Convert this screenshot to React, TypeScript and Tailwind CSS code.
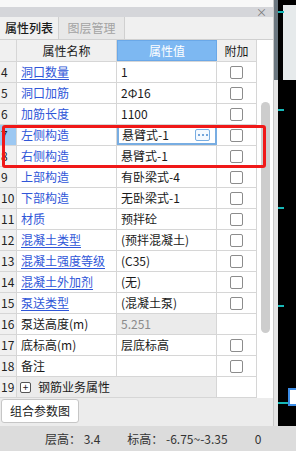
import React from "react";

type Row = {
  n: number;
  name: string;
  value: string;
  blue?: boolean;
  ul?: boolean;
  check?: boolean;
  readonly?: boolean;
  editing?: boolean;
};

const rows: Row[] = [
  { n: 4, name: "洞口数量", value: "1", blue: true, ul: true, check: true },
  { n: 5, name: "洞口加筋", value: "2Φ16", blue: true, check: true },
  { n: 6, name: "加筋长度", value: "1100", blue: true, check: true },
  { n: 7, name: "左侧构造", value: "悬臂式-1", blue: true, check: true, editing: true },
  { n: 8, name: "右侧构造", value: "悬臂式-1", blue: true, check: true },
  { n: 9, name: "上部构造", value: "有卧梁式-4", blue: true, check: true },
  { n: 10, name: "下部构造", value: "无卧梁式-1", blue: true, check: true },
  { n: 11, name: "材质", value: "预拌砼", blue: true, check: true },
  { n: 12, name: "混凝土类型", value: "(预拌混凝土)", blue: true, ul: true, check: true },
  { n: 13, name: "混凝土强度等级", value: "(C35)", blue: true, ul: true, check: true },
  { n: 14, name: "混凝土外加剂", value: "(无)", blue: true, ul: true, check: true },
  { n: 15, name: "泵送类型", value: "(混凝土泵)", blue: true, ul: true, check: true },
  { n: 16, name: "泵送高度(m)", value: "5.251", readonly: true },
  { n: 17, name: "底标高(m)", value: "层底标高", check: true },
  { n: 18, name: "备注", value: "", check: true },
];

function Checkbox() {
  return <span className="block h-[13px] w-[13px] rounded-[2px] border border-[#8c8c8c] bg-white" />;
}

function PropRow({ row }: { row: Row }) {
  return (
    <div className="flex h-[21px] border-b border-[#d6d6d6]">
      <div
        className={`flex w-[17px] items-center border-r border-[#d6d6d6] pl-[1px] text-[12px] text-[#222] ${
          row.editing ? "bg-[#9cc8f2]" : "bg-[#f0f0f0]"
        }`}
      >
        {row.n}
      </div>
      <div
        className={`flex w-[100px] items-center border-r border-[#d6d6d6] bg-white pl-[4px] text-[12px] ${
          row.blue ? "text-[#2f56d8]" : "text-[#1a1a1a]"
        }`}
      >
        <span className={row.ul ? "underline decoration-[#2f56d8] underline-offset-2" : ""}>{row.name}</span>
      </div>
      {row.editing ? (
        <div className="flex w-[100px] items-center justify-between border-2 border-[#78ade2] bg-white pl-[3px] pr-[5px] text-[12px] text-[#1a1a1a]">
          <span>{row.value}</span>
          <span className="flex h-[12px] w-[15px] items-center justify-center gap-[2px] rounded-[2px] border border-[#78ade2] bg-[#f4f9ff]">
            <span className="h-[2px] w-[2px] rounded-full bg-[#4a8ad0]" />
            <span className="h-[2px] w-[2px] rounded-full bg-[#4a8ad0]" />
            <span className="h-[2px] w-[2px] rounded-full bg-[#4a8ad0]" />
          </span>
        </div>
      ) : (
        <div
          className={`flex w-[100px] items-center border-r border-[#d6d6d6] pl-[4px] text-[12px] ${
            row.readonly ? "bg-[#ebebeb] text-[#8a8a8a]" : "bg-white text-[#1a1a1a]"
          }`}
        >
          {row.value}
        </div>
      )}
      <div className="flex w-[40px] items-center justify-center border-r border-[#d6d6d6] bg-white">
        {row.check && <Checkbox />}
      </div>
    </div>
  );
}

export default function App() {
  return (
    <div
      className="flex h-[451px] w-[296px] flex-col overflow-hidden bg-[#f0f0f0]"
      style={{ fontFamily: '"Microsoft YaHei", "Noto Sans CJK SC", sans-serif' }}
    >
      <div className="flex h-[426px]">
        {/* property panel */}
        <div className="flex w-[274px] flex-col border-r border-[#c8c8c8] bg-[#f0f0f0]">
          <div className="h-[7px] bg-[#f8f8f8]" />
          <div className="flex h-[10px] items-center justify-end bg-[#d5d6da] pr-[6px] text-[11px] leading-none text-[#777]">
            ×
          </div>
          <div className="flex h-[23px] items-stretch border-b border-[#d0d0d0]">
            <div className="flex w-[59px] items-center justify-center border-r border-[#d0d0d0] bg-[#f0f0f0] text-[12px] font-medium text-[#1a1a1a]">
              属性列表
            </div>
            <div className="flex w-[66px] items-center justify-center border-r border-[#d0d0d0] bg-[#e8e8e8] text-[12px] text-[#a3a3a3]">
              图层管理
            </div>
          </div>

          <div className="relative flex bg-white">
            <div className="flex flex-col">
              <div className="flex h-[22px] border-b border-[#d6d6d6] text-[12px]">
                <div className="w-[17px] border-r border-[#d6d6d6] bg-[#f0f0f0]" />
                <div className="flex w-[100px] items-center justify-center border-r border-[#d6d6d6] bg-[#f0f0f0] text-[#1a1a1a]">
                  属性名称
                </div>
                <div className="flex w-[100px] items-center justify-center border border-[#6aa8e8] bg-[#7db8f2] text-white">
                  属性值
                </div>
                <div className="flex w-[40px] items-center justify-center border-r border-[#d6d6d6] bg-[#f0f0f0] text-[#1a1a1a]">
                  附加
                </div>
              </div>
              {rows.map((r) => (
                <PropRow key={r.n} row={r} />
              ))}
              <div className="flex h-[21px] border-b border-[#d6d6d6] bg-[#ebebeb]">
                <div className="flex w-[17px] items-center border-r border-[#d6d6d6] bg-[#f0f0f0] pl-[1px] text-[12px] text-[#222]">
                  19
                </div>
                <div className="flex w-[200px] items-center gap-[7px] border-r border-[#d6d6d6] pl-[3px] text-[12px] text-[#1a1a1a]">
                  <span className="flex h-[11px] w-[11px] items-center justify-center rounded-[2px] border border-[#555] bg-white text-[10px] leading-none">
                    +
                  </span>
                  钢筋业务属性
                </div>
                <div className="w-[40px] border-r border-[#d6d6d6] bg-white" />
              </div>
            </div>
            {/* scrollbar */}
            <div className="flex w-[16px] justify-center bg-white pt-[62px]">
              <div className="h-[231px] w-[9px] rounded-full bg-[#cdcdcd]" />
            </div>
            {/* highlight */}
            <div className="absolute left-[2px] top-[85px] h-[43px] w-[264px] rounded-[3px] border-[3px] border-[#f01818]" />
          </div>

          <div className="flex flex-1 items-start bg-[#ececec] pl-[1px] pt-[1px]">
            <button className="h-[24px] w-[78px] rounded-[3px] border border-[#c6c6c6] bg-white text-[12px] text-[#1a1a1a]">
              组合参数图
            </button>
          </div>
        </div>

        <div className="flex w-[4px] flex-col bg-[#e4e4e4]">
          <div className="h-[80px] bg-[#6b7780]" />
        </div>

        {/* drawing area */}
        <div className="relative flex-1 bg-black">
          <div className="absolute left-[5px] top-[5px] h-[75px] w-[14px] bg-[#e6eaeb]" />
          <div className="absolute left-0 top-[11px] h-[2px] w-[6px] bg-[#17b8b8]" />
          <div className="absolute left-0 top-[109px] h-[2px] w-[6px] bg-[#17b8b8]" />
          <div className="absolute left-0 top-[207px] h-[2px] w-[6px] bg-[#17b8b8]" />
          <div className="absolute left-0 top-[305px] h-[2px] w-[6px] bg-[#17b8b8]" />
          <div className="absolute left-0 top-[402px] h-[2px] w-[10px] bg-[#17b8b8]" />
          <div className="absolute left-[10px] top-[388px] flex h-[18px] w-[10px] items-center justify-center border-2 border-[#3d8ee8] bg-white" />
        </div>
      </div>

      <div className="flex h-[25px] items-center bg-[#dcdcdc] text-[12px] text-[#333]">
        <span className="ml-[45px]">层高： 3.4</span>
        <span className="ml-[27px]">标高： -6.75~-3.35</span>
        <span className="ml-[27px]">0</span>
      </div>
    </div>
  );
}
